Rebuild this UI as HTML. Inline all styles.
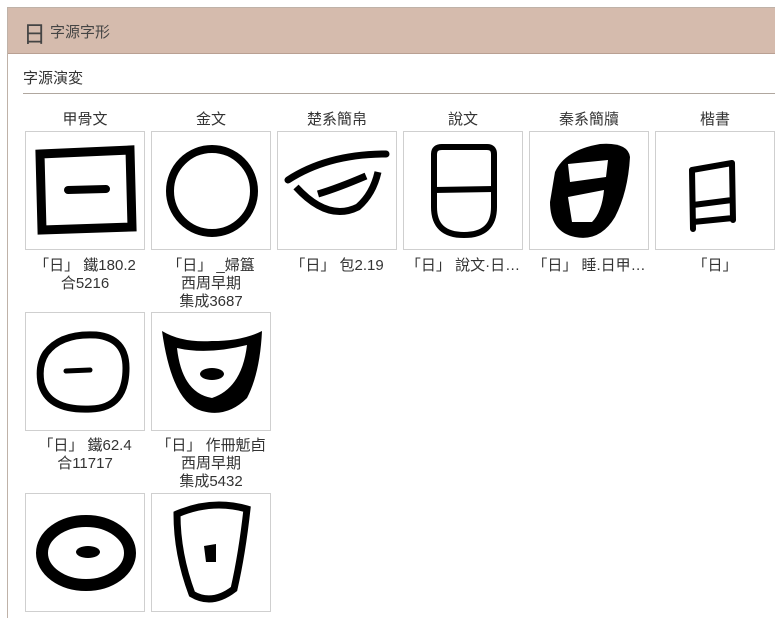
<!DOCTYPE html>
<html style="overflow:hidden;height:618px"><head><meta charset="utf-8"><style>
body{margin:0;width:775px;height:618px;overflow:hidden;background:#fff;font-family:"Liberation Sans","Noto Sans CJK TC",sans-serif;color:#333;position:relative}
.panel{position:absolute;left:7px;top:7px;width:767px;height:611px;border-left:1px solid #bfb2a8;border-top:1px solid #bfb2a8}
.hd{position:absolute;left:8px;top:8px;width:767px;height:45px;background:#d5bbad;border-bottom:1px solid #b9a093}
.t{position:absolute;white-space:nowrap}
.box{position:absolute;width:118px;height:117px;border:1px solid #cfcfcf;background:#fff}
.box svg{position:absolute;left:0;top:0}
.lab{position:absolute;width:126px;text-align:center;font-size:15px;color:#333}
.cap{position:absolute;width:126px;text-align:center;font-size:15px;line-height:18px;color:#333}
</style></head><body>
<div class="panel"></div>
<div class="hd"></div>
<div class="t" style="left:23px;top:15px;font-size:23px;color:#444">日</div>
<div class="t" style="left:50px;top:21px;font-size:15px;color:#444">字源字形</div>
<div class="t" style="left:23px;top:67px;font-size:15px;color:#333">字源演変</div>
<div style="position:absolute;left:23px;top:93px;width:752px;height:1px;background:#b0a79f"></div>

<div class="lab" style="left:22px;top:108px">甲骨文</div>
<div class="lab" style="left:148px;top:108px">金文</div>
<div class="lab" style="left:274px;top:108px">楚系簡帛</div>
<div class="lab" style="left:400px;top:108px">說文</div>
<div class="lab" style="left:526px;top:108px">秦系簡牘</div>
<div class="lab" style="left:652px;top:108px">楷書</div>

<div class="box" style="left:25px;top:131px"><svg width="120" height="119"><path d="M14 22 L104 18 L106 95 L16 98 Z" fill="none" stroke="#000" stroke-width="9"/><path d="M42 58 L80 57" stroke="#000" stroke-width="8" stroke-linecap="round"/></svg></div>
<div class="box" style="left:151px;top:131px"><svg width="120" height="119"><circle cx="60" cy="59" r="42" fill="none" stroke="#000" stroke-width="8"/></svg></div>
<div class="box" style="left:277px;top:131px"><svg width="120" height="119"><path d="M10 48 Q50 22 108 22" fill="none" stroke="#000" stroke-width="7" stroke-linecap="round"/><path d="M18 55 Q50 90 80 75 Q95 62 100 40" fill="none" stroke="#000" stroke-width="7"/><path d="M40 62 Q60 56 88 44" stroke="#000" stroke-width="7" fill="none"/></svg></div>
<div class="box" style="left:403px;top:131px"><svg width="120" height="119"><path d="M30 22 Q30 15 38 15 L83 15 Q90 15 90 22 L90 75 Q90 103 60 103 Q30 103 30 75 Z" fill="none" stroke="#000" stroke-width="6"/><path d="M30 58 L90 57" stroke="#000" stroke-width="6"/></svg></div>
<div class="box" style="left:529px;top:131px"><svg width="120" height="119"><path d="M25 40 Q35 18 70 12 Q98 10 100 25 Q98 60 85 85 Q70 110 45 105 Q20 100 20 70 Z" fill="#000"/><path d="M38 32 L78 28 L76 45 L40 50 Z M38 65 L74 58 Q72 80 62 90 L42 90 Z" fill="#fff"/></svg></div>
<div class="box" style="left:655px;top:131px"><svg width="120" height="119"><path d="M36 38 L37 97 M36 38 L76 31 M76 31 L77 88 M37 73 L76 68 M37 90 L77 86" fill="none" stroke="#000" stroke-width="6" stroke-linecap="round"/></svg></div>

<div class="cap" style="left:22px;top:257px">「日」 鐵180.2<br>合5216</div>
<div class="cap" style="left:148px;top:257px">「日」 _婦簋<br>西周早期<br>集成3687</div>
<div class="cap" style="left:274px;top:257px">「日」 包2.19</div>
<div class="cap" style="left:400px;top:257px">「日」 說文·日…</div>
<div class="cap" style="left:526px;top:257px">「日」 睡.日甲…</div>
<div class="cap" style="left:652px;top:257px">「日」</div>

<div class="box" style="left:25px;top:312px"><svg width="120" height="119"><path d="M20 40 Q35 20 70 22 Q100 25 100 55 Q100 95 65 96 Q22 98 15 70 Q12 52 20 40 Z" fill="none" stroke="#000" stroke-width="7"/><path d="M40 58 L64 57" stroke="#000" stroke-width="5" stroke-linecap="round"/></svg></div>
<div class="box" style="left:151px;top:312px"><svg width="120" height="119"><path d="M10 18 Q30 30 60 28 Q90 28 110 18 Q108 60 95 85 Q75 105 50 98 Q20 90 10 18 Z" fill="#000"/><path d="M25 35 Q55 42 95 32 Q90 75 60 85 Q30 80 25 35 Z" fill="#fff"/><ellipse cx="60" cy="61" rx="12" ry="6" fill="#000"/></svg></div>
<div class="cap" style="left:22px;top:437px">「日」 鐵62.4<br>合11717</div>
<div class="cap" style="left:148px;top:437px">「日」 作冊鬿卣<br>西周早期<br>集成5432</div>

<div class="box" style="left:25px;top:493px"><svg width="120" height="119"><ellipse cx="60" cy="59" rx="44" ry="32" fill="none" stroke="#000" stroke-width="12"/><ellipse cx="62" cy="58" rx="12" ry="6" fill="#000"/></svg></div>
<div class="box" style="left:151px;top:493px"><svg width="120" height="119"><path d="M25 20 Q60 5 95 15 Q90 60 82 95 Q60 112 40 100 Q25 60 25 20 Z" fill="none" stroke="#000" stroke-width="7"/><path d="M52 52 L64 50 L64 68 L54 68 Z" fill="#000"/></svg></div>
</body></html>
